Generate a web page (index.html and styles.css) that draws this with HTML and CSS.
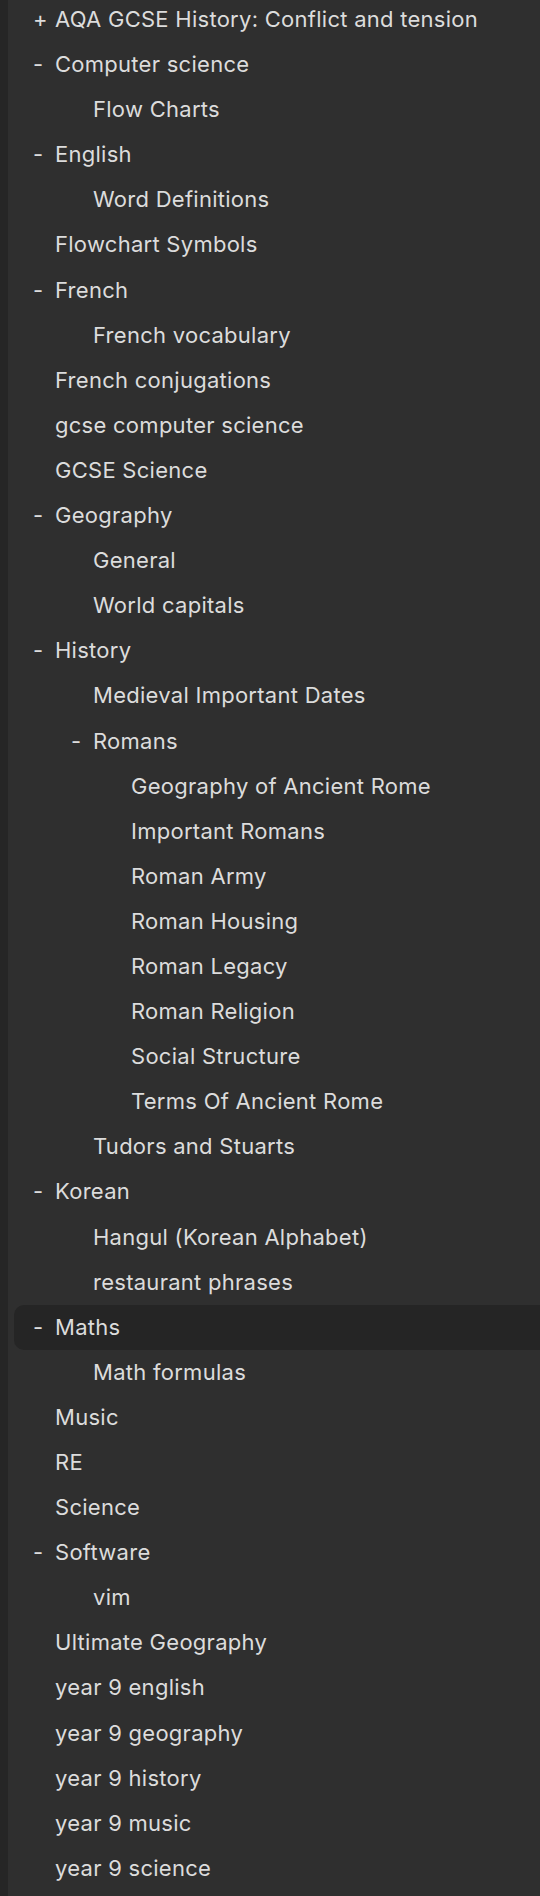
FILE: index.html
```html
<!DOCTYPE html>
<html lang="en">
<head>
<meta charset="utf-8">
<title>Notes tree</title>
<link rel="stylesheet" href="styles.css">
</head>
<body>
<div class="pane">
  <div class="strip"></div>
  <ul class="tree">
    <li class="row lvl0"><span class="mark">+</span><span class="label">AQA GCSE History: Conflict and tension</span></li>
    <li class="row lvl0"><span class="mark">-</span><span class="label">Computer science</span></li>
    <li class="row lvl1"><span class="mark"></span><span class="label">Flow Charts</span></li>
    <li class="row lvl0"><span class="mark">-</span><span class="label">English</span></li>
    <li class="row lvl1"><span class="mark"></span><span class="label">Word Definitions</span></li>
    <li class="row lvl0"><span class="mark"></span><span class="label">Flowchart Symbols</span></li>
    <li class="row lvl0"><span class="mark">-</span><span class="label">French</span></li>
    <li class="row lvl1"><span class="mark"></span><span class="label">French vocabulary</span></li>
    <li class="row lvl0"><span class="mark"></span><span class="label">French conjugations</span></li>
    <li class="row lvl0"><span class="mark"></span><span class="label">gcse computer science</span></li>
    <li class="row lvl0"><span class="mark"></span><span class="label">GCSE Science</span></li>
    <li class="row lvl0"><span class="mark">-</span><span class="label">Geography</span></li>
    <li class="row lvl1"><span class="mark"></span><span class="label">General</span></li>
    <li class="row lvl1"><span class="mark"></span><span class="label">World capitals</span></li>
    <li class="row lvl0"><span class="mark">-</span><span class="label">History</span></li>
    <li class="row lvl1"><span class="mark"></span><span class="label">Medieval Important Dates</span></li>
    <li class="row lvl1"><span class="mark">-</span><span class="label">Romans</span></li>
    <li class="row lvl2"><span class="mark"></span><span class="label">Geography of Ancient Rome</span></li>
    <li class="row lvl2"><span class="mark"></span><span class="label">Important Romans</span></li>
    <li class="row lvl2"><span class="mark"></span><span class="label">Roman Army</span></li>
    <li class="row lvl2"><span class="mark"></span><span class="label">Roman Housing</span></li>
    <li class="row lvl2"><span class="mark"></span><span class="label">Roman Legacy</span></li>
    <li class="row lvl2"><span class="mark"></span><span class="label">Roman Religion</span></li>
    <li class="row lvl2"><span class="mark"></span><span class="label">Social Structure</span></li>
    <li class="row lvl2"><span class="mark"></span><span class="label">Terms Of Ancient Rome</span></li>
    <li class="row lvl1"><span class="mark"></span><span class="label">Tudors and Stuarts</span></li>
    <li class="row lvl0"><span class="mark">-</span><span class="label">Korean</span></li>
    <li class="row lvl1"><span class="mark"></span><span class="label">Hangul (Korean Alphabet)</span></li>
    <li class="row lvl1"><span class="mark"></span><span class="label">restaurant phrases</span></li>
    <li class="row lvl0 active"><span class="mark">-</span><span class="label">Maths</span></li>
    <li class="row lvl1"><span class="mark"></span><span class="label">Math formulas</span></li>
    <li class="row lvl0"><span class="mark"></span><span class="label">Music</span></li>
    <li class="row lvl0"><span class="mark"></span><span class="label">RE</span></li>
    <li class="row lvl0"><span class="mark"></span><span class="label">Science</span></li>
    <li class="row lvl0"><span class="mark">-</span><span class="label">Software</span></li>
    <li class="row lvl1"><span class="mark"></span><span class="label">vim</span></li>
    <li class="row lvl0"><span class="mark"></span><span class="label">Ultimate Geography</span></li>
    <li class="row lvl0"><span class="mark"></span><span class="label">year 9 english</span></li>
    <li class="row lvl0"><span class="mark"></span><span class="label">year 9 geography</span></li>
    <li class="row lvl0"><span class="mark"></span><span class="label">year 9 history</span></li>
    <li class="row lvl0"><span class="mark"></span><span class="label">year 9 music</span></li>
    <li class="row lvl0"><span class="mark"></span><span class="label">year 9 science</span></li>
  </ul>
</div>
</body>
</html>
```

FILE: styles.css
```css
html, body {
  margin: 0;
  padding: 0;
  background: #2f2f2f;
}
body {
  font-family: Inter, "Noto Sans", "Liberation Sans", sans-serif;
  font-size: 22px;
  letter-spacing: 0.27px;
  color: #dcdcdc;
  height: 1896px;
  overflow: hidden;
}
.pane {
  display: flex;
  height: 1896px;
}
.strip {
  width: 8px;
  flex: 0 0 8px;
  background: #262626;
}
.tree {
  list-style: none;
  margin: -3px 0 0 0;
  padding: 0 0 0 6px;
  flex: 1;
}
.row {
  height: 45.1px;
  line-height: 45.1px;
  display: flex;
  align-items: center;
  white-space: nowrap;
  border-radius: 10px 0 0 10px;
}
.row.active {
  background: #252525;
}
.lvl0 { padding-left: 19px; }
.lvl1 { padding-left: 57px; }
.lvl2 { padding-left: 95px; }
.mark {
  width: 22px;
  flex: 0 0 22px;
}
.label {
  flex: none;
}
```
